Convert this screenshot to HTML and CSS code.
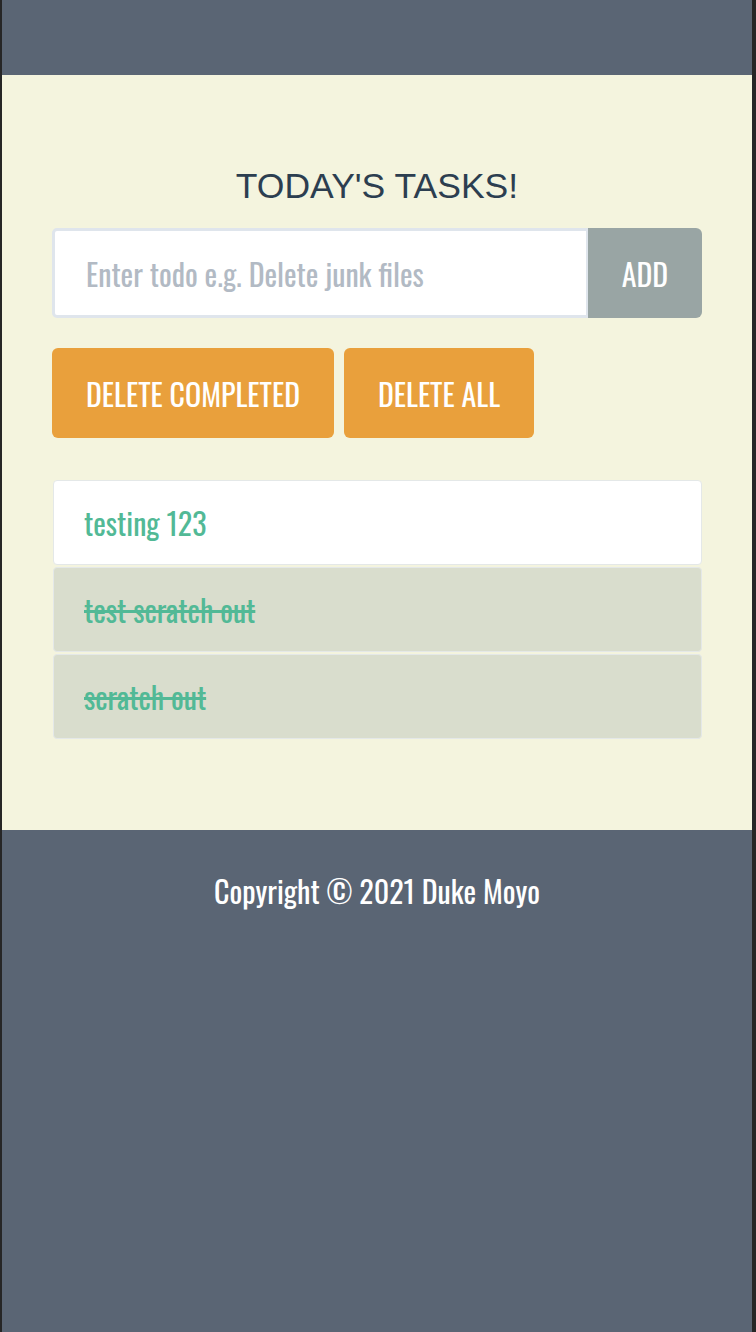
FILE: index.html
```html
<!DOCTYPE html>
<html lang="en">
<head>
<meta charset="utf-8">
<title>Todo</title>
<link rel="stylesheet" href="styles.css">
</head>
<body>
  <header class="top-bar"></header>
  <main class="app">
    <h1 class="title">TODAY'S TASKS!</h1>
    <form class="add-form">
      <input class="todo-input" type="text" placeholder="Enter todo e.g. Delete junk files">
      <button class="btn-add" type="button">ADD</button>
    </form>
    <div class="actions">
      <button class="btn-action" type="button">DELETE COMPLETED</button>
      <button class="btn-action" type="button">DELETE ALL</button>
    </div>
    <ul class="todo-list">
      <li class="todo-item">testing 123</li>
      <li class="todo-item done">test scratch out</li>
      <li class="todo-item done">scratch out</li>
    </ul>
  </main>
  <footer class="footer">
    <p class="copyright">Copyright © 2021 Duke Moyo</p>
  </footer>
</body>
</html>
```

FILE: styles.css
```css
html, body {
  margin: 0;
  padding: 0;
}

body {
  min-height: 100vh;
  box-sizing: border-box;
  background: #5a6574;
  border-left: 2px solid #262626;
  border-right: 4px solid #262626;
  font-family: "Oswald", "Liberation Sans Narrow", "DejaVu Sans Condensed", "Liberation Sans", sans-serif;
}

.top-bar {
  height: 75px;
  background: #5a6574;
}

.app {
  background: #f4f4de;
  padding: 91px 50px 91px 50px;
}

.title {
  margin: 0 0 22px 0;
  font-family: "Liberation Sans", Arial, sans-serif;
  font-weight: normal;
  font-size: 35.5px;
  line-height: 40px;
  text-align: center;
  color: #2c3e50;
}

.add-form {
  display: flex;
  height: 90px;
  margin: 0 0 30px 0;
}

.todo-input {
  flex: 1;
  min-width: 0;
  box-sizing: border-box;
  height: 90px;
  margin: 0;
  border: 3px solid #dfe5ec;
  border-right-width: 2px;
  border-radius: 5px 0 0 5px;
  background: #ffffff;
  padding: 0 0 0 31px;
  font-family: inherit;
  font-size: 30px;
  color: #2c3e50;
  outline: none;
}

.todo-input::placeholder {
  color: #b2bac4;
}

.btn-add {
  width: 114px;
  height: 90px;
  margin: 0;
  border: none;
  border-radius: 0 6px 6px 0;
  background: #99a5a4;
  color: #ffffff;
  font-family: inherit;
  font-size: 30px;
  padding: 0;
}

.actions {
  display: flex;
  gap: 10px;
  margin: 0 0 42px 0;
}

.btn-action {
  height: 90px;
  margin: 0;
  border: none;
  border-radius: 6px;
  background: #e9a03c;
  color: #ffffff;
  padding: 0 34px 0 34px;
  font-family: inherit;
  font-size: 30px;
}

.todo-list {
  list-style: none;
  margin: 0;
  padding: 0;
  display: flex;
  flex-direction: column;
  gap: 2px;
}

.todo-item {
  box-sizing: border-box;
  height: 85px;
  display: flex;
  align-items: center;
  padding: 0 0 0 30px;
  margin: 0 0 0 1px;
  background: #ffffff;
  border: 1px solid #e4e8e8;
  border-radius: 4px;
  color: #52b996;
  font-size: 30px;
}

.todo-item.done {
  background: #d9ddcd;
  text-decoration: line-through;
}

.footer {
  background: #5a6574;
  padding: 40px 0 0 0;
}

.copyright {
  margin: 0;
  text-align: center;
  color: #ffffff;
  font-size: 30px;
  line-height: 42px;
}
```
